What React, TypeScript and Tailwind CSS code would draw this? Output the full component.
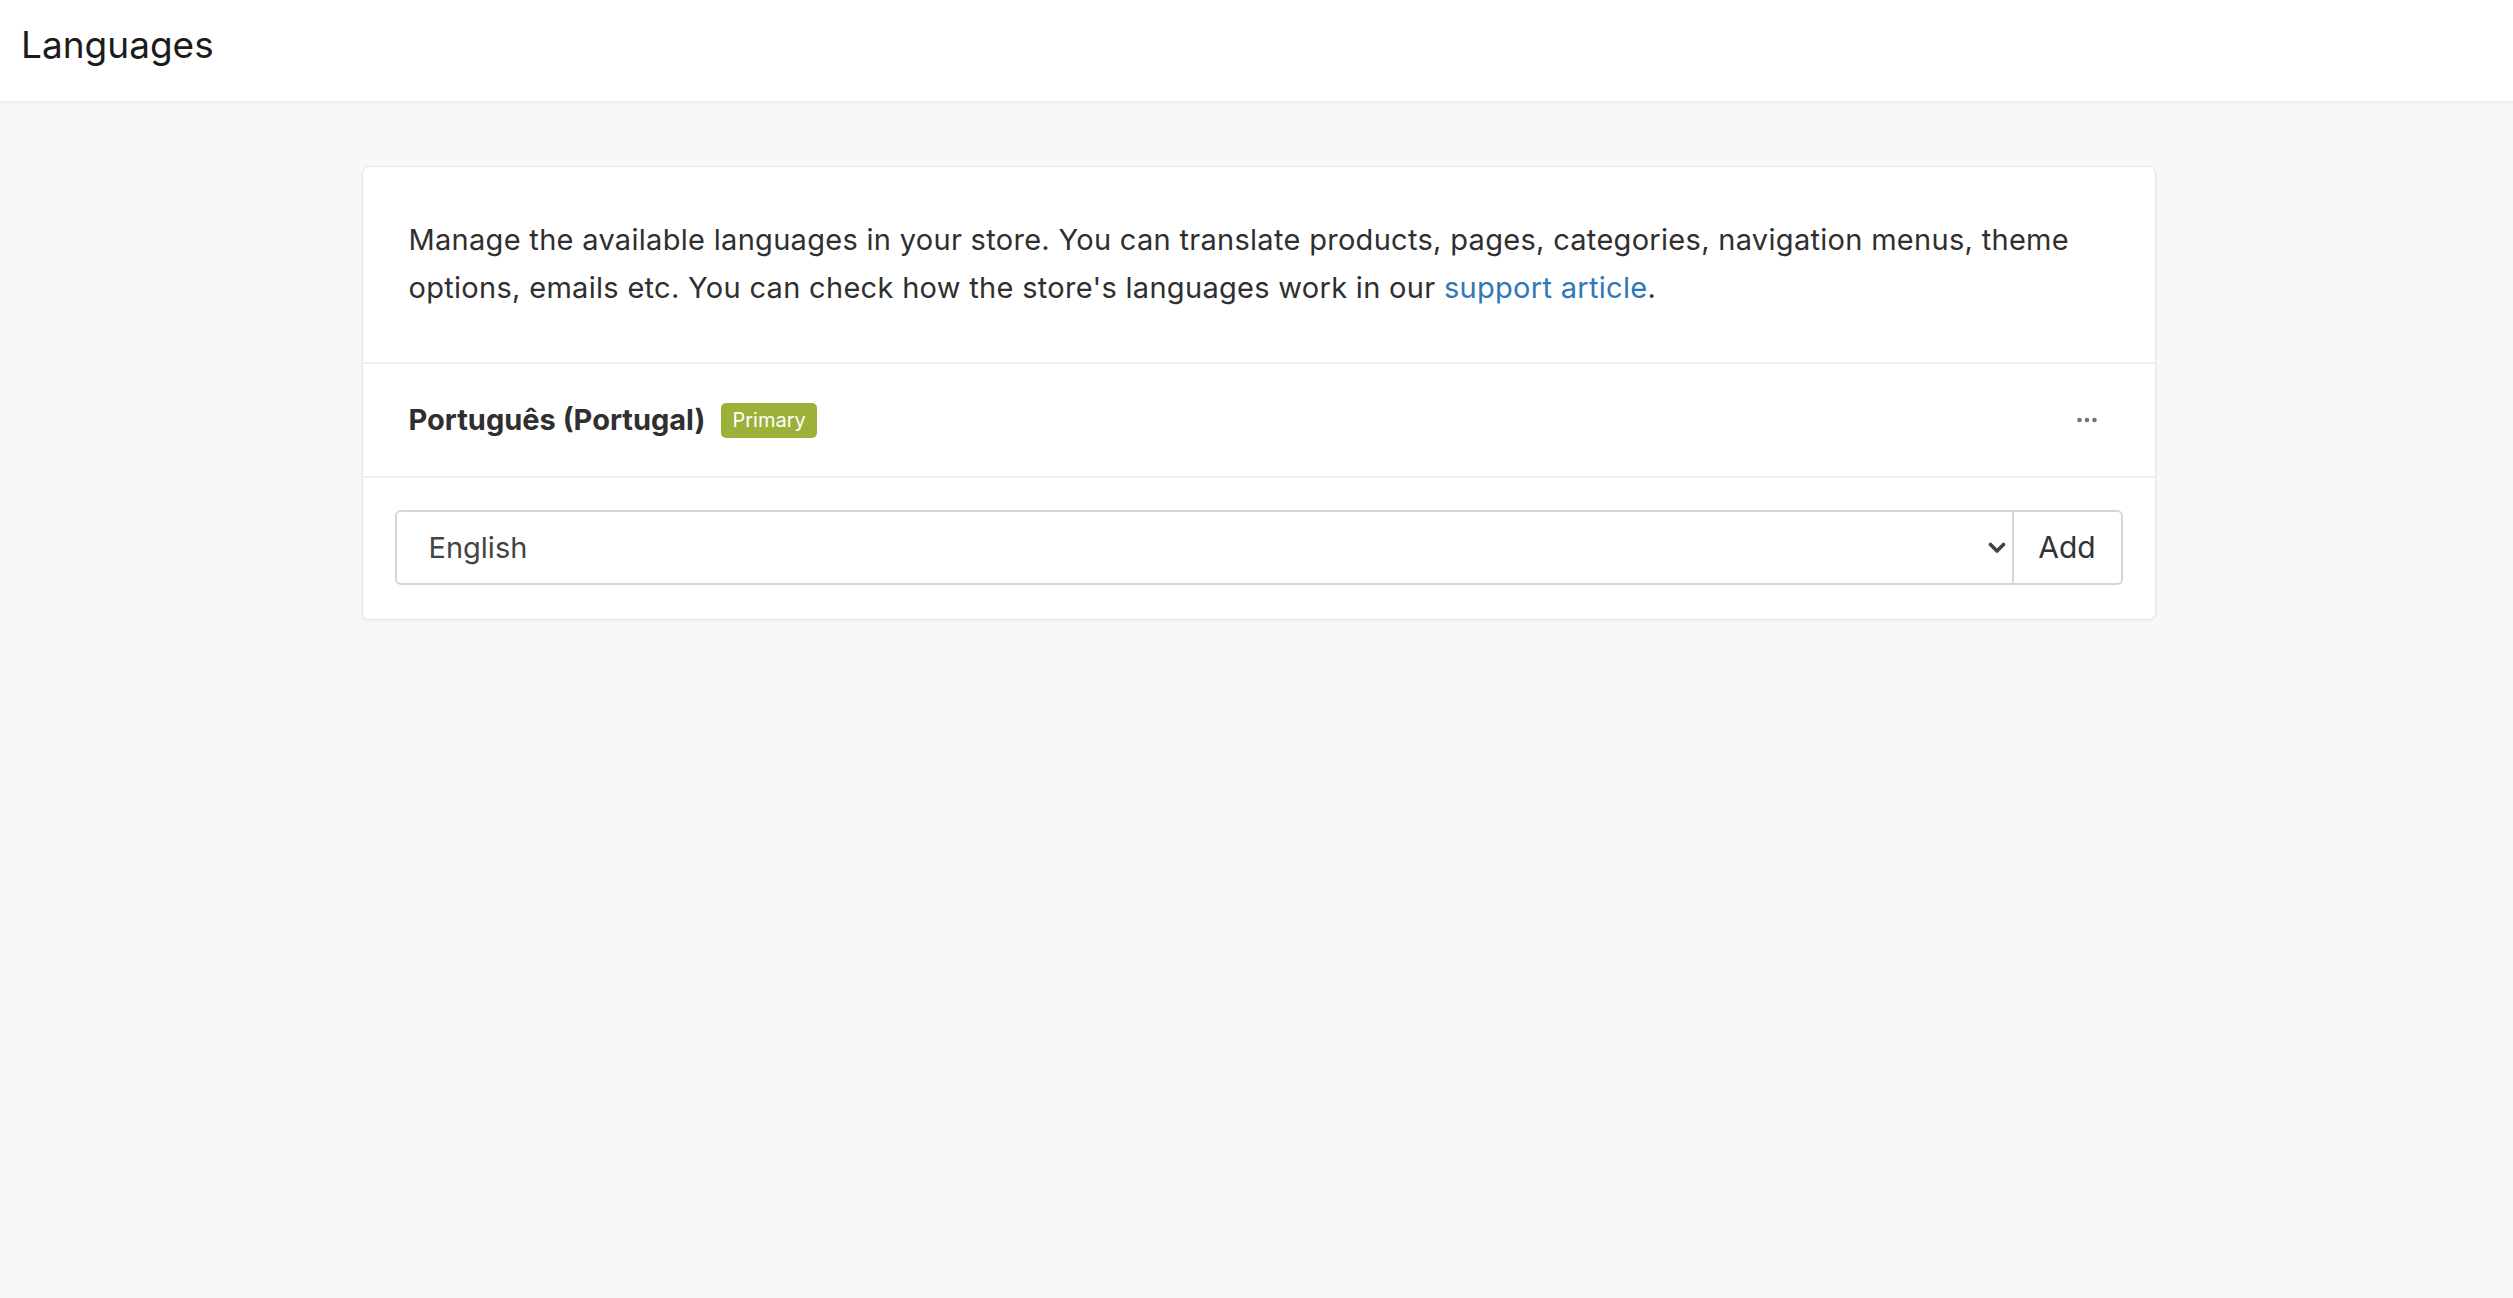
import { useState } from "react"

const languages = ["English", "Español", "Français", "Deutsch", "Italiano"]

function MoreIcon() {
  return (
    <svg width="20" height="6" viewBox="0 0 20 6" fill="#6f747b">
      <circle cx="2.5" cy="3" r="2.3" />
      <circle cx="10" cy="3" r="2.3" />
      <circle cx="17.5" cy="3" r="2.3" />
    </svg>
  )
}

function Chevron() {
  return (
    <svg width="18" height="12" viewBox="0 0 18 12" fill="none">
      <path d="M2.5 2.5 9 9l6.5-6.5" stroke="#3f4348" strokeWidth="3.6" strokeLinecap="round" strokeLinejoin="round" />
    </svg>
  )
}

export default function App() {
  const [lang, setLang] = useState("English")

  return (
    <div className="min-h-screen bg-[#f7f8fa] font-['Inter',_'Liberation_Sans',_sans-serif] text-[#333]">
      <header className="flex h-[103px] items-center border-b-2 border-[#eceef1] bg-white pb-[12px] pl-[21px]">
        <h1 className="text-[37px] leading-none text-[#1c1c1c]">Languages</h1>
      </header>

      <main className="pt-[63px] pl-[4px]">
        <div className="mx-auto w-[1794px] overflow-hidden rounded-[7px] border border-[#e4e6e9] bg-white shadow-[0_1px_3px_rgba(0,0,0,0.06)]">
          <p className="px-[46px] pt-[49px] pb-[50px] text-[29px] leading-[48px] tracking-[0.3px] text-[#2f2f2f]">
            Manage the available languages in your store. You can translate products, pages, categories, navigation menus, theme options, emails etc. You can check how the store's languages work in our{" "}
            <a href="#" className="text-[#2f77b8]">support article</a>.
          </p>

          <div className="flex h-[114px] items-center justify-between border-t-2 border-[#eceef1] pl-[46px] pr-[58px]">
            <div className="flex items-center gap-[16px]">
              <span className="text-[29px] font-bold text-[#2f2f2f]">Português (Portugal)</span>
              <span className="flex h-[35px] items-center rounded-[5px] bg-[#9bb13a] px-[11px] text-[20px] text-white">Primary</span>
            </div>
            <button className="flex h-[20px] items-center">
              <MoreIcon />
            </button>
          </div>

          <div className="flex border-t-2 border-[#eceef1] px-[32px] pt-[32px] pb-[34px]">
            <div className="relative flex-1">
              <select
                value={lang}
                onChange={(e) => setLang(e.target.value)}
                className="h-[75px] w-full appearance-none rounded-l-[6px] border-2 border-[#d3d6da] bg-white pl-[32px] text-[29px] text-[#444] focus:outline-none"
              >
                {languages.map((l) => (
                  <option key={l} value={l}>{l}</option>
                ))}
              </select>
              <span className="pointer-events-none absolute top-1/2 right-[8px] -translate-y-1/2">
                <Chevron />
              </span>
            </div>
            <button className="h-[75px] w-[109px] rounded-r-[6px] border-2 border-l-0 border-[#d3d6da] bg-white text-[30px] text-[#333]">
              Add
            </button>
          </div>
        </div>
      </main>
    </div>
  )
}
